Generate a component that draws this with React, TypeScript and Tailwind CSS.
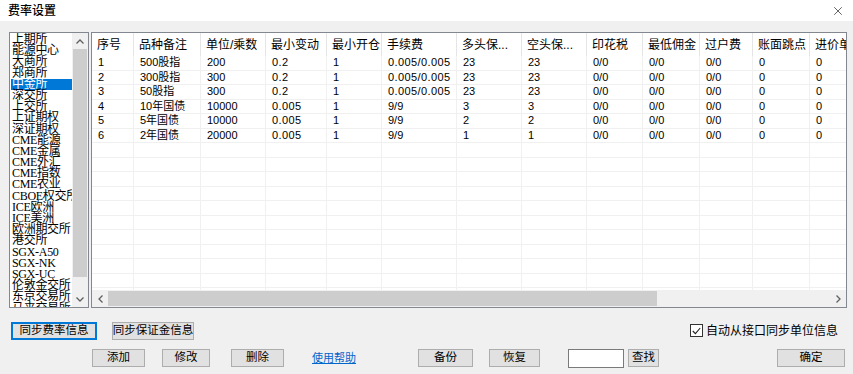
import { X } from 'lucide-react';

const exchanges = [
  '上期所', '能源中心', '大商所', '郑商所', '中金所', '深交所', '上交所', '上证期权', '深证期权',
  'CME能源', 'CME金属', 'CME外汇', 'CME指数', 'CME农业', 'CBOE权交所', 'ICE欧洲', 'ICE美洲',
  '欧洲期交所', '港交所', 'SGX-A50', 'SGX-NK', 'SGX-UC', '伦敦金交所', '东京交易所', '马来交易所',
];

const columns = [
  { title: '序号', w: 'w-[42px]' },
  { title: '品种备注', w: 'w-[67px]' },
  { title: '单位/乘数', w: 'w-[65px]' },
  { title: '最小变动', w: 'w-[61px]' },
  { title: '最小开仓', w: 'w-[55px]' },
  { title: '手续费', w: 'w-[75px]' },
  { title: '多头保...', w: 'w-[65px]' },
  { title: '空头保...', w: 'w-[65px]' },
  { title: '印花税', w: 'w-[56px]' },
  { title: '最低佣金', w: 'w-[57px]' },
  { title: '过户费', w: 'w-[53px]' },
  { title: '账面跳点', w: 'w-[57px]' },
  { title: '进价单位', w: 'w-[60px]' },
];

const rows = [
  ['1', '500股指', '200', '0.2', '1', '0.005/0.005', '23', '23', '0/0', '0/0', '0/0', '0', '0'],
  ['2', '300股指', '300', '0.2', '1', '0.005/0.005', '23', '23', '0/0', '0/0', '0/0', '0', '0'],
  ['3', '50股指', '300', '0.2', '1', '0.005/0.005', '23', '23', '0/0', '0/0', '0/0', '0', '0'],
  ['4', '10年国债', '10000', '0.005', '1', '9/9', '3', '3', '0/0', '0/0', '0/0', '0', '0'],
  ['5', '5年国债', '10000', '0.005', '1', '9/9', '2', '2', '0/0', '0/0', '0/0', '0', '0'],
  ['6', '2年国债', '20000', '0.005', '1', '9/9', '1', '1', '0/0', '0/0', '0/0', '0', '0'],
];

const emptyRows = Array.from({ length: 11 }, () => columns.map(() => ''));

const Btn = ({ label, className = '' }: { label: string; className?: string }) => (
  <button className={`h-[18px] bg-[#e1e1e1] border border-[#adadad] text-[11.5px] leading-none text-[#000] whitespace-nowrap flex items-center justify-center ${className}`}>
    {label}
  </button>
);

const App = () => {
  return (
    <div
      className="w-[853px] h-[374px] bg-[#f0f0f0] flex flex-col overflow-hidden text-[#000]"
      style={{ fontFamily: '"Liberation Sans", "Noto Sans CJK SC", sans-serif' }}
    >
      {/* title bar */}
      <div className="h-[21px] bg-white flex items-center justify-between pl-[8px] pr-[8px] shrink-0">
        <span className="text-[12px] font-medium">费率设置</span>
        <X size={14} strokeWidth={1.2} className="text-[#222]" />
      </div>

      <div className="flex pl-[9px] pt-[11px] gap-[2px] h-[287px] shrink-0">
        {/* exchange list */}
        <div className="w-[80px] h-[276px] border border-[#828790] bg-white flex">
          <div className="flex-1 overflow-hidden pl-[1px] pt-[1px]">
            {exchanges.map((ex) => (
              <div
                key={ex}
                className={`h-[11.2px] leading-[11.2px] text-[12px] whitespace-nowrap pl-[1px] tracking-[-0.3px] ${
                  ex === '中金所' ? 'bg-[#0078d7] text-white' : 'text-[#000]'
                }`}
                style={{ fontFamily: '"Liberation Serif", "Noto Sans CJK SC", serif' }}
              >
                {ex}
              </div>
            ))}
          </div>
          <div className="w-[16px] bg-[#f0f0f0] flex flex-col">
            <div className="h-[16px] flex items-center justify-center">
              <svg width="8" height="5" viewBox="0 0 8 5"><path d="M0.5 4.5 L4 1 L7.5 4.5" fill="none" stroke="#606060" strokeWidth="1.3" /></svg>
            </div>
            <div className="h-[228px] mx-[1px] bg-[#cdcdcd]" />
            <div className="flex-1" />
            <div className="h-[16px] flex items-center justify-center">
              <svg width="8" height="5" viewBox="0 0 8 5"><path d="M0.5 0.5 L4 4 L7.5 0.5" fill="none" stroke="#606060" strokeWidth="1.3" /></svg>
            </div>
          </div>
        </div>

        {/* fee table */}
        <div className="w-[756px] h-[276px] border border-[#828790] bg-white flex flex-col">
          <div className="flex-1 overflow-hidden">
            <div className="flex h-[23px] w-[900px]">
              {columns.map((c) => (
                <div key={c.title} className={`${c.w} shrink-0 border-r border-[#e5e5e5] flex items-center pl-[5px] text-[12px] whitespace-nowrap overflow-hidden`}>
                  {c.title}
                </div>
              ))}
            </div>
            {[...rows, ...emptyRows].map((r, i) => (
              <div key={i} className="flex h-[14.5px] w-[900px] border-b border-[#f0f0f0]">
                {r.map((v, j) => (
                  <div
                    key={j}
                    className={`${columns[j].w} shrink-0 border-r border-[#f0f0f0] flex items-center pl-[6px] text-[11px] leading-none whitespace-nowrap ${
                      v.includes('.') ? 'tracking-[0.4px]' : ''
                    }`}
                  >
                    {v}
                  </div>
                ))}
              </div>
            ))}
          </div>
          <div className="h-[17px] bg-[#f0f0f0] flex items-center shrink-0">
            <div className="w-[16px] h-full flex items-center justify-center">
              <svg width="5" height="8" viewBox="0 0 5 8"><path d="M4.5 0.5 L1 4 L4.5 7.5" fill="none" stroke="#606060" strokeWidth="1.3" /></svg>
            </div>
            <div className="w-[549px] h-[15px] bg-[#cdcdcd]" />
            <div className="flex-1" />
            <div className="w-[16px] h-full flex items-center justify-center">
              <svg width="5" height="8" viewBox="0 0 5 8"><path d="M0.5 0.5 L4 4 L0.5 7.5" fill="none" stroke="#606060" strokeWidth="1.3" /></svg>
            </div>
          </div>
        </div>
      </div>

      {/* sync row */}
      <div className="flex items-center h-[19px] mt-[13px] pl-[11px] pr-[15px] shrink-0">
        <button className="w-[86px] h-[18px] bg-[#e1e1e1] border-2 border-[#0078d7] text-[11.5px] leading-none whitespace-nowrap flex items-center justify-center">
          同步费率信息
        </button>
        <Btn label="同步保证金信息" className="w-[82px] ml-[15px]" />
        <div className="flex-1" />
        <label className="flex items-center gap-[3px] text-[12px]">
          <span className="w-[13px] h-[13px] border border-[#333] bg-white flex items-center justify-center">
            <svg width="9" height="8" viewBox="0 0 9 8"><path d="M0.8 4 L3.4 6.6 L8.2 1" fill="none" stroke="#222" strokeWidth="1.1" /></svg>
          </span>
          自动从接口同步单位信息
        </label>
      </div>

      {/* action row */}
      <div className="flex items-center h-[18px] mt-[9px] shrink-0">
        <Btn label="添加" className="w-[53px] ml-[92px]" />
        <Btn label="修改" className="w-[48px] ml-[17px]" />
        <Btn label="删除" className="w-[53px] ml-[21px]" />
        <span className="ml-[28px] text-[11px] text-[#0066cc] underline leading-none">使用帮助</span>
        <Btn label="备份" className="w-[55px] ml-[62px]" />
        <Btn label="恢复" className="w-[51px] ml-[16px]" />
        <div className="w-[56px] h-[19px] ml-[28px] bg-white border border-[#7a7a7a]" />
        <Btn label="查找" className="w-[31px] ml-[4px]" />
        <Btn label="确定" className="w-[68px] ml-[118px]" />
      </div>
    </div>
  );
};

export default App;
